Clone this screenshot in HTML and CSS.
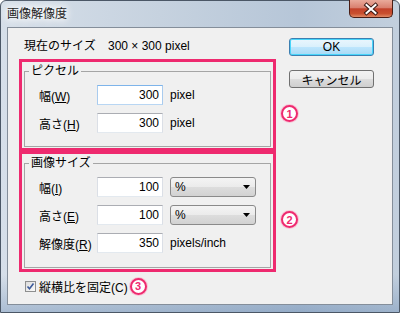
FILE: index.html
```html
<!DOCTYPE html>
<html>
  <head>
    <title>画像解像度</title>
    <link rel="stylesheet" href="styles.css">
  </head>
  <body>
    <div class="window">
      <div class="titlebar">
        <span class="title">画像解像度</span>
        <div class="close">
          <svg width="42" height="17" viewBox="0 0 42 17">
            <path d="M16.5 5 L25.5 13 M25.5 5 L16.5 13" stroke="#3a1a14" stroke-width="4" stroke-linecap="square"/>
            <path d="M16.5 5 L25.5 13 M25.5 5 L16.5 13" stroke="#fff" stroke-width="2" stroke-linecap="square"/>
          </svg>
        </div>
      </div>

      <div class="client">
        <div class="main">
          <div class="current">
            <span class="current-label">現在のサイズ</span>
            <span>300 × 300 pixel</span>
          </div>

          <!-- pixel size -->
          <div class="mark-row">
            <div class="pink">
              <fieldset class="group">
                <legend>ピクセル</legend>
                <div class="rows">
                  <div class="field">
                    <label>幅(<u>W</u>)</label>
                    <input class="text-box hover" type="text" value="300">
                    <span class="unit">pixel</span>
                  </div>
                  <div class="field">
                    <label>高さ(<u>H</u>)</label>
                    <input class="text-box" type="text" value="300">
                    <span class="unit">pixel</span>
                  </div>
                </div>
              </fieldset>
            </div>
            <span class="mark mark-1">1</span>
          </div>

          <!-- image size -->
          <div class="mark-row mark-row-2">
            <div class="pink">
              <fieldset class="group group-image">
                <legend>画像サイズ</legend>
                <div class="rows">
                  <div class="field">
                    <label>幅(<u>I</u>)</label>
                    <input class="text-box" type="text" value="100">
                    <div class="select">
                      <span>%</span>
                      <svg width="7" height="4" viewBox="0 0 7 4"><path d="M0 0 H7 L3.5 4 Z" fill="#000"/></svg>
                    </div>
                  </div>
                  <div class="field">
                    <label>高さ(<u>E</u>)</label>
                    <input class="text-box" type="text" value="100">
                    <div class="select">
                      <span>%</span>
                      <svg width="7" height="4" viewBox="0 0 7 4"><path d="M0 0 H7 L3.5 4 Z" fill="#000"/></svg>
                    </div>
                  </div>
                  <div class="field">
                    <label>解像度(<u>R</u>)</label>
                    <input class="text-box" type="text" value="350">
                    <span class="unit">pixels/inch</span>
                  </div>
                </div>
              </fieldset>
            </div>
            <span class="mark mark-2">2</span>
          </div>

          <div class="check-row">
            <span class="checkbox">
              <svg width="9" height="9" viewBox="0 0 9 9"><path d="M1.5 4.5 L3.5 6.8 L7.5 1.5" fill="none" stroke="#3c5a9a" stroke-width="1.6"/></svg>
            </span>
            <span class="check-label">縦横比を固定(C)</span>
            <span class="mark mark-3">3</span>
          </div>
        </div>

        <div class="side">
          <button class="btn btn-default">OK</button>
          <button class="btn">キャンセル</button>
        </div>
      </div>
    </div>
  </body>
</html>
```

FILE: styles.css
```css
* {
  box-sizing: border-box;
}
body {
  margin: 0;
  font-family: "Liberation Sans", "Noto Sans CJK JP", sans-serif;
  font-size: 12px;
  color: #000;
}
.window {
  width: 400px;
  height: 313px;
  border: 1px solid #4b5766;
  border-radius: 6px 6px 0 0;
  background: linear-gradient(to bottom, rgba(0,0,0,0) 88%, rgba(70,110,160,.3)),
    linear-gradient(to right, #d6dfe9 0%, #c6d2df 40%, #b6c6d8 75%, #c2cfdd 100%);
  display: flex;
  flex-direction: column;
}
.titlebar {
  height: 26px;
  flex: none;
  display: flex;
  justify-content: space-between;
  align-items: flex-start;
  padding: 0 6px;
}
.title {
  line-height: 26px;
  color: #1e1e1e;
  text-shadow: 0 0 6px #fff, 0 0 10px #fff, 0 0 12px #fff;
}
.close {
  width: 44px;
  height: 18px;
  margin-top: -1px;
  border: 1px solid #4a1d14;
  border-top: none;
  border-radius: 0 0 5px 5px;
  background: linear-gradient(#e9aa9b, #d9806f 45%, #c2412a 52%, #c9502f 80%, #e08a66);
}
.close svg {
  display: block;
}

.client {
  margin: 0 6px;
  height: 278px;
  flex: none;
  border: 1px solid #848e9a;
  background: #f0f0f0;
  display: flex;
}
.main {
  width: 281px;
  flex: none;
  padding-top: 11px;
}
.current {
  display: flex;
  padding-left: 16px;
  line-height: 14px;
}
.current-label {
  width: 84px;
}

.mark-row {
  display: flex;
  align-items: flex-start;
  margin: 6px 0 0 11px;
}
.mark-row-2 {
  margin-top: 0;
}
.pink {
  width: 257px;
  flex: none;
  border: 3px solid #ee2a6f;
  padding: 2px 2px 1px;
}
.group {
  margin: 0;
  padding: 0;
  min-width: 0;
  border: 1px solid #a5a5a5;
}
.group legend {
  margin-left: 4px;
  padding: 0 2px;
  line-height: 14px;
}
.rows {
  display: flex;
  flex-direction: column;
  gap: 8px;
  padding: 7px 0 13px 14px;
}
.group-image .rows {
  padding-bottom: 14px;
}
.field {
  display: flex;
  align-items: center;
  height: 20px;
}
.field label {
  width: 58px;
}
.text-box {
  width: 66px;
  height: 20px;
  margin: 0;
  padding: 0 3px;
  font: inherit;
  text-align: right;
  background: #fff;
  border: 1px solid;
  border-color: #abadb3 #dbdfe6 #e3e9ef;
  outline: none;
}
.text-box.hover {
  border-color: #7eb4ea #a9cbee #b8d6f3;
}
.unit {
  margin-left: 7px;
}
.select {
  margin-left: 7px;
  width: 86px;
  height: 20px;
  display: flex;
  justify-content: space-between;
  align-items: center;
  padding: 0 5px 0 4px;
  border: 1px solid #8a8a8a;
  border-radius: 3px;
  background: linear-gradient(#f4f4f4, #ebebeb 50%, #dddddd 50%, #d2d2d2);
}

.mark {
  width: 17px;
  height: 17px;
  flex: none;
  margin-left: 5px;
  border: 2px solid #ee2a6f;
  border-radius: 50%;
  background: #fff;
  box-shadow: 0 0 0 1px #f8c4d6;
  color: #ee2a6f;
  font-weight: bold;
  font-size: 11px;
  display: flex;
  justify-content: center;
  align-items: center;
}
.mark-1 {
  margin-top: 46px;
}
.mark-2 {
  margin-top: 60px;
}
.mark-3 {
  margin-left: 2px;
}

.check-row {
  display: flex;
  align-items: center;
  margin-top: 7px;
  padding-left: 17px;
  height: 14px;
}
.checkbox {
  width: 11px;
  height: 11px;
  border: 1px solid #8e8f8f;
  background: linear-gradient(135deg, #dcdcdc, #fbfbfb);
  display: flex;
  justify-content: center;
  align-items: center;
}
.check-label {
  margin-left: 3px;
}

.side {
  width: 85px;
  flex: none;
  padding-top: 10px;
  display: flex;
  flex-direction: column;
  gap: 14px;
}
.btn {
  width: 85px;
  height: 18px;
  margin: 0;
  padding: 0;
  font: inherit;
  color: #000;
  border: 1px solid #707070;
  border-radius: 3px;
  background: linear-gradient(#f2f2f2, #ebebeb 50%, #dddddd 50%, #cfcfcf);
}
.btn-default {
  border-color: #3c7fb1;
  box-shadow: inset 0 0 0 1px #48d5fa;
  background: linear-gradient(#eaf6fd, #d9f0fc 50%, #bee6fd 50%, #a7d9f5);
}
```
